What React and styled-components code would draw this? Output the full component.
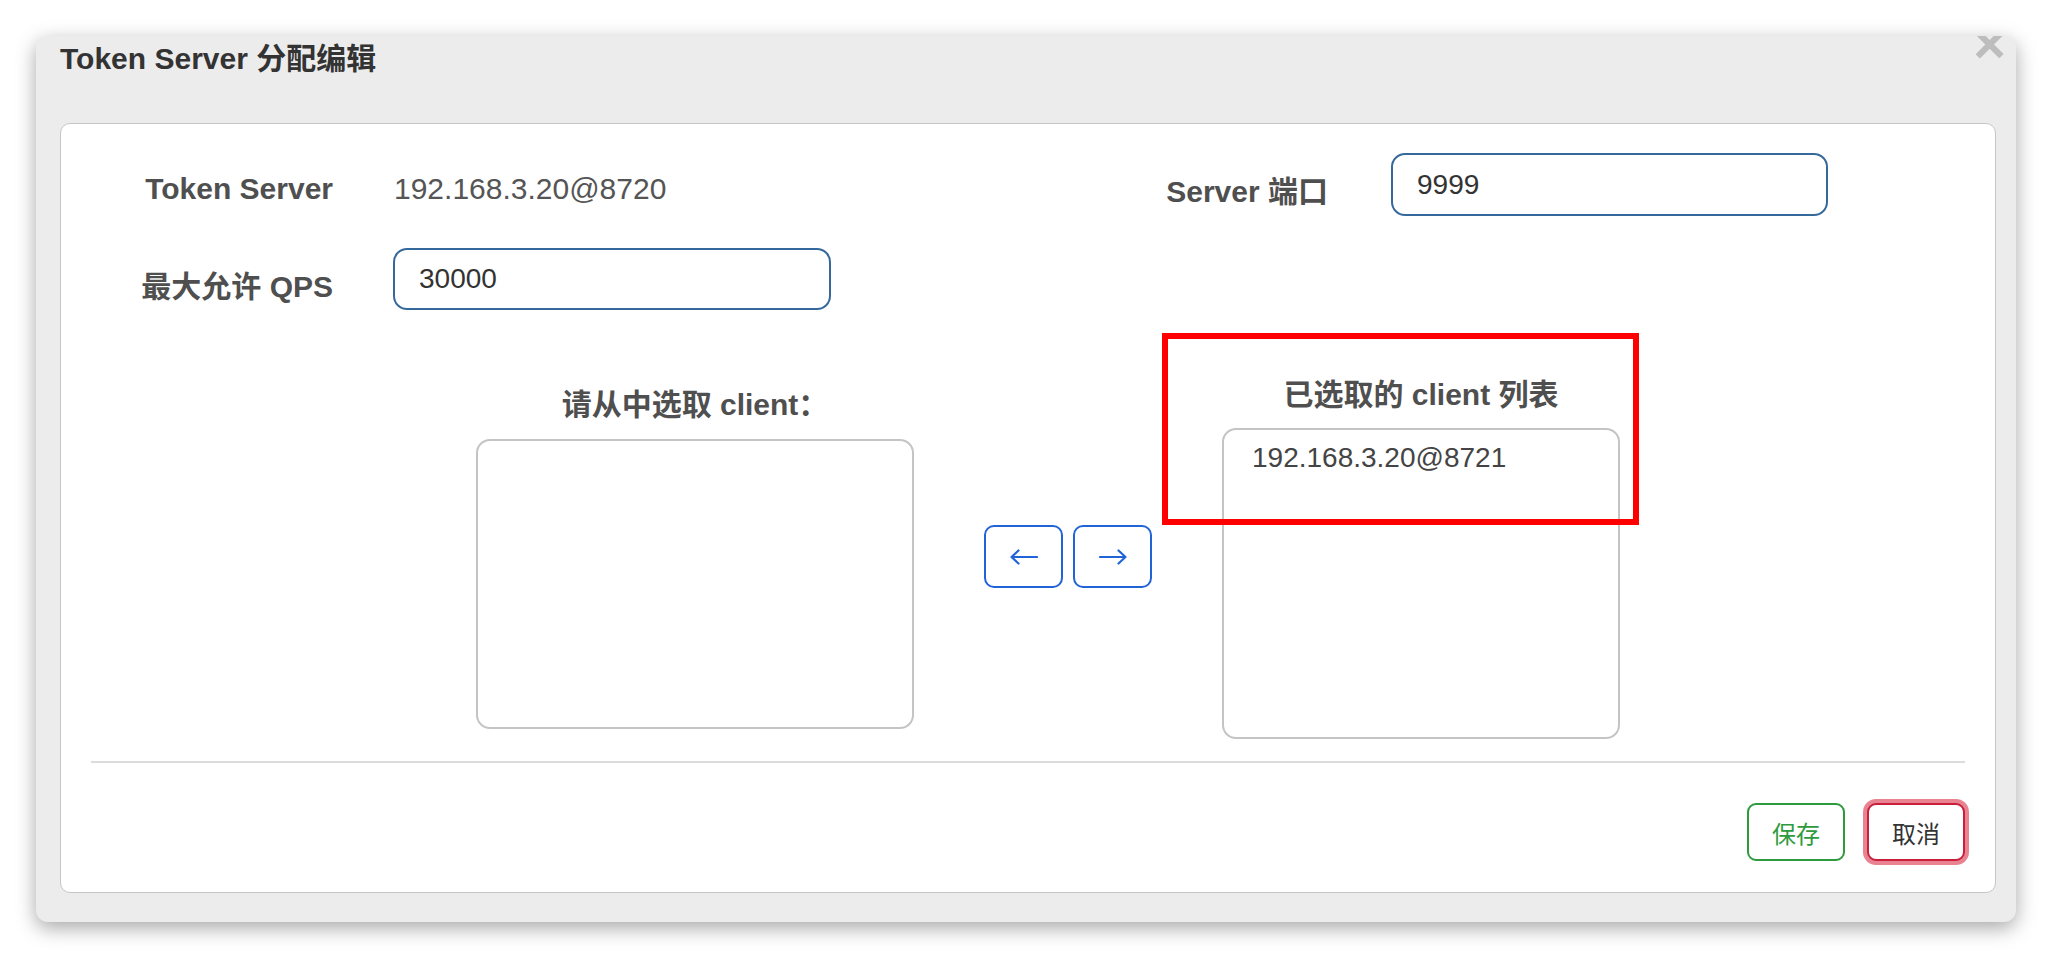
import React from "react";
import styled, { createGlobalStyle } from "styled-components";

const GlobalStyle = createGlobalStyle`
  html, body {
    margin: 0;
    padding: 0;
    background: #ffffff;
  }
  body {
    font-family: "Liberation Sans", "Noto Sans CJK SC", sans-serif;
    color: #4d4d4d;
  }
  * { box-sizing: border-box; }
`;

const Page = styled.div`
  padding: 36px;
  width: 2052px;
  height: 958px;
`;

const Dialog = styled.div`
  position: relative;
  overflow: hidden;
  width: 1980px;
  background: #ececec;
  border-radius: 12px;
  padding: 5px 20px 29px 24px;
  box-shadow: 0 6px 20px rgba(0, 0, 0, 0.35);
`;

const Header = styled.div`
  height: 82px;
`;

const Title = styled.h4`
  margin: 0;
  font-size: 30px;
  line-height: 36px;
  font-weight: 700;
  color: #333333;
  font-family: "Liberation Sans", "Noto Sans CJK SC", sans-serif;
`;

const Close = styled.span`
  position: absolute;
  top: -20px;
  right: 10px;
  font-size: 56px;
  line-height: 56px;
  font-weight: 700;
  color: #bdbdbd;
  font-family: "Liberation Sans", sans-serif;
`;

const Panel = styled.div`
  background: #ffffff;
  border: 1px solid #c6c6c6;
  border-radius: 10px;
  padding: 29px 30px 31px 30px;
`;

const FormRow = styled.div`
  display: grid;
  grid-template-columns: 937px 937px;
  margin-bottom: ${(p) => p.$gap || 0}px;
`;

const Field = styled.div`
  display: flex;
  align-items: center;
  height: ${(p) => p.$height}px;
`;

const Label = styled.label`
  width: ${(p) => p.$width}px;
  margin-right: ${(p) => p.$gap}px;
  padding-top: 9px;
  text-align: right;
  font-size: 30px;
  font-weight: 700;
  color: #4f4f4f;
  white-space: nowrap;
`;

const StaticValue = styled.span`
  padding-top: 9px;
  padding-left: 1px;
  font-size: 30px;
  color: #555555;
`;

const Input = styled.input`
  width: ${(p) => p.$width}px;
  height: ${(p) => p.$height}px;
  border: 2px solid #36699b;
  border-radius: 14px;
  padding: 0 24px;
  font-size: 28px;
  color: #333333;
  font-family: "Liberation Sans", sans-serif;
  background: #fff;
  outline: none;
`;

const Section = styled.div`
  display: flex;
  align-items: center;
  gap: 70px;
  padding-left: 385px;
  margin-top: 64px;
`;

const ListColumn = styled.div`
  position: relative;
  display: flex;
  flex-direction: column;
  width: ${(p) => p.$width}px;
`;

const ListHeading = styled.div`
  text-align: center;
  font-size: 30px;
  line-height: 42px;
  font-weight: 700;
  color: #4f4f4f;
  margin-bottom: ${(p) => p.$gap}px;
  white-space: nowrap;
`;

const ListBox = styled.div`
  height: ${(p) => p.$height}px;
  border: 2px solid #c4c4c4;
  border-radius: 14px;
  padding: 8px 28px;
  background: #fff;
`;

const ListItem = styled.div`
  font-size: 28px;
  line-height: 39px;
  color: #444444;
`;

const ArrowGroup = styled.div`
  display: flex;
  gap: 10px;
`;

const ArrowButton = styled.button`
  width: 79px;
  height: 63px;
  border: 2px solid #2064d8;
  border-radius: 10px;
  background: #fff;
  color: #2064d8;
  padding: 0;
  display: flex;
  align-items: center;
  justify-content: center;
`;

const Annotation = styled.div`
  position: absolute;
  left: -60px;
  top: -41px;
  width: 477px;
  height: 192px;
  border: 6px solid #ff0000;
  pointer-events: none;
`;

const Divider = styled.hr`
  margin: 22px 0 0 0;
  border: 0;
  height: 2px;
  background: #dcdcdc;
`;

const Footer = styled.div`
  display: flex;
  justify-content: flex-end;
  gap: 22px;
  padding-top: 40px;
`;

const ActionButton = styled.button`
  width: 98px;
  height: 58px;
  border-radius: 9px;
  background: #fff;
  border: 2px solid ${(p) => (p.$variant === "danger" ? "#c8203a" : "#2e9a3e")};
  color: ${(p) => (p.$variant === "danger" ? "#333333" : "#2e9a3e")};
  box-shadow: ${(p) =>
    p.$variant === "danger" ? "0 0 0 4px rgba(226, 90, 108, 0.75)" : "none"};
  font-size: 24px;
  font-family: "Noto Sans CJK SC", sans-serif;
  padding: 0;
`;

function Arrow({ dir }) {
  const flip = dir === "left";
  return (
    <svg width="28" height="16" viewBox="0 0 28 16" fill="none"
      style={flip ? { transform: "scaleX(-1)" } : undefined}>
      <path d="M1 8 H26.5 M19.5 1.5 L26.5 8 L19.5 14.5"
        stroke="currentColor" strokeWidth="2.2" strokeLinecap="round" strokeLinejoin="round" />
    </svg>
  );
}

export default function App() {
  return (
    <>
      <GlobalStyle />
      <Page>
        <Dialog>
          <Close>×</Close>
          <Header>
            <Title>Token Server 分配编辑</Title>
          </Header>
          <Panel>
            <FormRow $gap={32}>
              <Field $height={63}>
                <Label $width={242} $gap={60}>Token Server</Label>
                <StaticValue>192.168.3.20@8720</StaticValue>
              </Field>
              <Field $height={63}>
                <Label $width={300} $gap={63}>Server 端口</Label>
                <Input $width={437} $height={63} defaultValue="9999" />
              </Field>
            </FormRow>
            <FormRow>
              <Field $height={62}>
                <Label $width={242} $gap={60}>最大允许 QPS</Label>
                <Input $width={438} $height={62} defaultValue="30000" />
              </Field>
            </FormRow>
            <Section>
              <ListColumn $width={438}>
                <ListHeading $gap={13}>请从中选取 client：</ListHeading>
                <ListBox $height={290} />
              </ListColumn>
              <ArrowGroup>
                <ArrowButton aria-label="←"><Arrow dir="left" /></ArrowButton>
                <ArrowButton aria-label="→"><Arrow dir="right" /></ArrowButton>
              </ArrowGroup>
              <ListColumn $width={398}>
                <ListHeading $gap={12}>已选取的 client 列表</ListHeading>
                <ListBox $height={311}>
                  <ListItem>192.168.3.20@8721</ListItem>
                </ListBox>
                <Annotation />
              </ListColumn>
            </Section>
            <Divider />
            <Footer>
              <ActionButton>保存</ActionButton>
              <ActionButton $variant="danger">取消</ActionButton>
            </Footer>
          </Panel>
        </Dialog>
      </Page>
    </>
  );
}
